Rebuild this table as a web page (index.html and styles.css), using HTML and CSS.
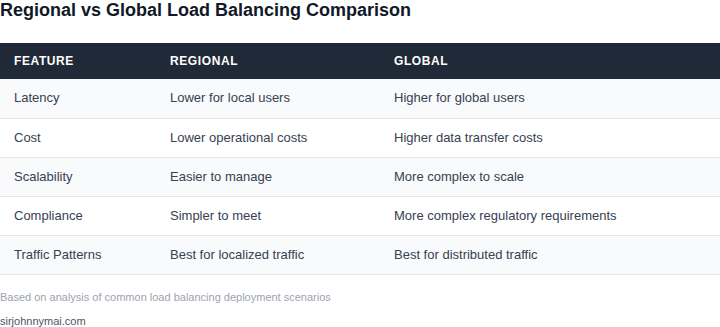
FILE: index.html
```html
<!DOCTYPE html>
<html>
<head>
<meta charset="utf-8">
<link rel="stylesheet" href="styles.css">
</head>
<body>
<h1 class="title">Regional vs Global Load Balancing Comparison</h1>
<table class="cmp">
  <thead>
    <tr><th class="c1">Feature</th><th class="c2">Regional</th><th class="c3">Global</th></tr>
  </thead>
  <tbody>
    <tr><td>Latency</td><td>Lower for local users</td><td>Higher for global users</td></tr>
    <tr><td>Cost</td><td>Lower operational costs</td><td>Higher data transfer costs</td></tr>
    <tr><td>Scalability</td><td>Easier to manage</td><td>More complex to scale</td></tr>
    <tr><td>Compliance</td><td>Simpler to meet</td><td>More complex regulatory requirements</td></tr>
    <tr><td>Traffic Patterns</td><td>Best for localized traffic</td><td>Best for distributed traffic</td></tr>
  </tbody>
</table>
<p class="note">Based on analysis of common load balancing deployment scenarios</p>
<p class="source">sirjohnnymai.com</p>
</body>
</html>
```
FILE: styles.css
```css
html, body {
  margin: 0;
  padding: 0;
  background: #ffffff;
  font-family: "Liberation Sans", Arial, sans-serif;
}
.title {
  margin: 0 0 22px;
  font-size: 18px;
  line-height: 21px;
  font-weight: bold;
  color: #111827;
}
.cmp {
  width: 100%;
  border-collapse: collapse;
  table-layout: fixed;
}
.cmp th, .cmp td {
  box-sizing: border-box;
}
.c1 { width: 156px; }
.c2 { width: 224px; }
.cmp th {
  background: #1f2937;
  color: #ffffff;
  text-align: left;
  text-transform: uppercase;
  font-size: 12px;
  font-weight: bold;
  letter-spacing: 0.6px;
  line-height: 14px;
  padding: 11px 14px;
}
.cmp td {
  font-size: 13px;
  line-height: 14px;
  color: #374151;
  padding: 12px 14px;
  border-bottom: 1px solid #e5e7eb;
}
.cmp tbody tr:first-child td {
  padding-bottom: 13px;
}
.cmp tbody tr:nth-child(odd) td {
  background: #f9fafb;
}
.note {
  margin: 16px 0 0;
  font-size: 11px;
  line-height: 13px;
  color: #9ca3af;
}
.source {
  margin: 11px 0 0;
  font-size: 11px;
  line-height: 13px;
  color: #4b5563;
}
```
